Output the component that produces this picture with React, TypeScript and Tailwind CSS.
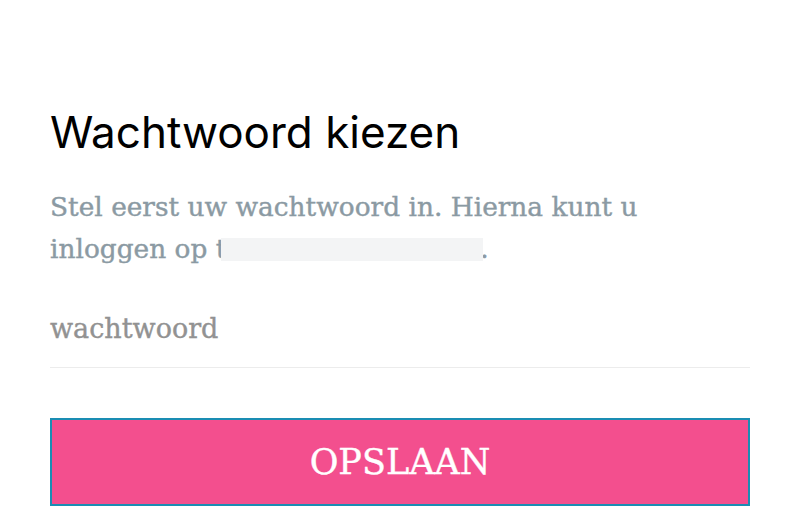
import React from "react";

export default function App() {
  return (
    <div className="w-[800px] h-[524px] bg-white px-[50px] pt-[104px] overflow-hidden">
      <h1 className="font-['Inter','Noto_Sans',sans-serif] text-[44px] leading-[56px] text-black font-normal">
        Wachtwoord kiezen
      </h1>
      <p className="mt-[26px] font-['DejaVu_Serif',serif] text-[26.4px] leading-[42px] text-[#8b9aa3] [-webkit-text-stroke:0.4px_#8b9aa3]">
        Stel eerst uw wachtwoord in. Hierna kunt u
        <br />
        inloggen op t
        <span className="inline-block align-middle w-[262px] h-[23px] bg-[#f3f4f5] -ml-[5px] -mr-[3px] -translate-y-[2px]" />
        .
      </p>
      <div className="mt-[42px] border-b border-[#ececec] pb-[21px] font-['DejaVu_Serif',serif] text-[27px] leading-[34px] text-[#929292] [-webkit-text-stroke:0.4px_#929292]">
        wachtwoord
      </div>
      <button className="mt-[50px] w-full h-[88px] bg-[#f34f8e] border-2 border-[#1a8db3] text-white text-[35px] font-['DejaVu_Serif',serif] [-webkit-text-stroke:0.4px_#ffffff] flex items-center justify-center">
        OPSLAAN
      </button>
    </div>
  );
}
